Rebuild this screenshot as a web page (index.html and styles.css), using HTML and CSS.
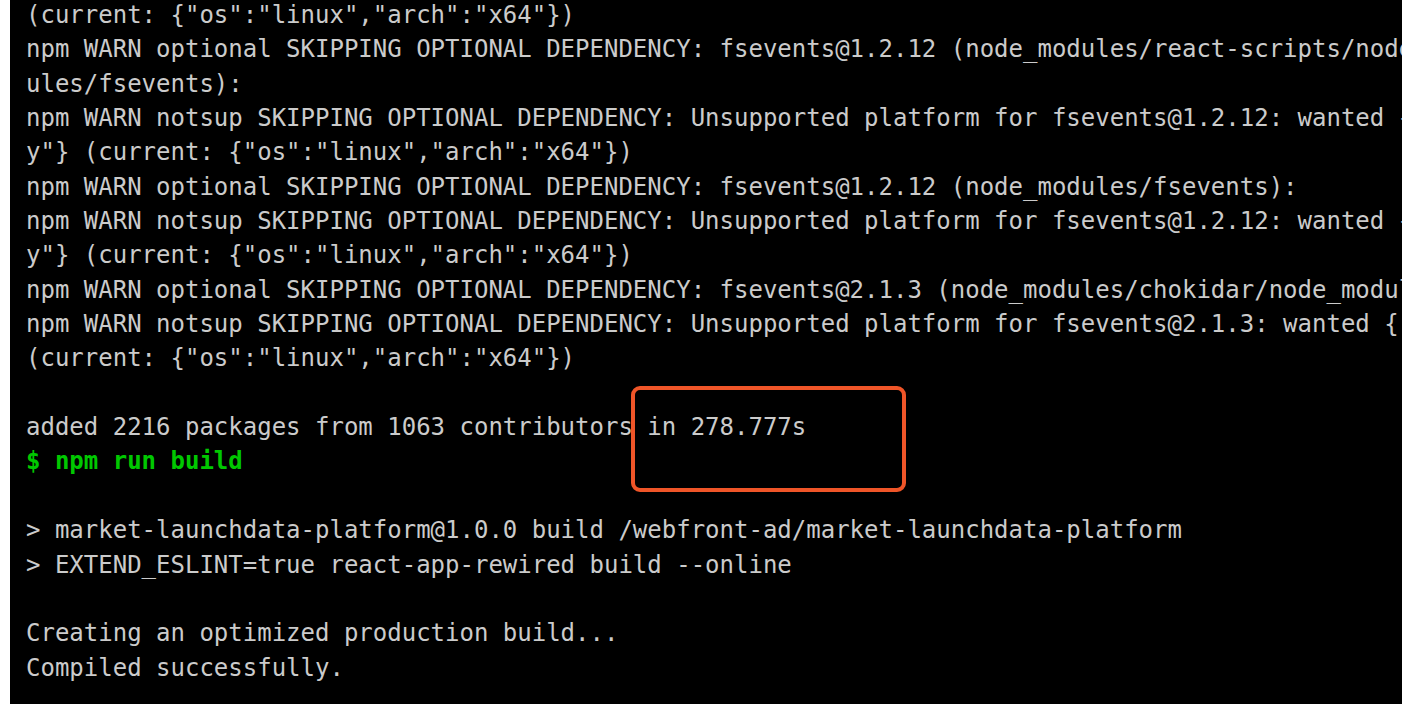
FILE: index.html
```html
<!DOCTYPE html>
<html>
<head>
<meta charset="utf-8">
<link rel="stylesheet" href="styles.css">
</head>
<body>
<div class="terminal">
<pre class="output">(current: {"os":"linux","arch":"x64"})
npm WARN optional SKIPPING OPTIONAL DEPENDENCY: fsevents@1.2.12 (node_modules/react-scripts/node_mod
ules/fsevents):
npm WARN notsup SKIPPING OPTIONAL DEPENDENCY: Unsupported platform for fsevents@1.2.12: wanted {"os":"darwin","arch":"an
y"} (current: {"os":"linux","arch":"x64"})
npm WARN optional SKIPPING OPTIONAL DEPENDENCY: fsevents@1.2.12 (node_modules/fsevents):
npm WARN notsup SKIPPING OPTIONAL DEPENDENCY: Unsupported platform for fsevents@1.2.12: wanted {"os":"darwin","arch":"an
y"} (current: {"os":"linux","arch":"x64"})
npm WARN optional SKIPPING OPTIONAL DEPENDENCY: fsevents@2.1.3 (node_modules/chokidar/node_modules/fsevents):
npm WARN notsup SKIPPING OPTIONAL DEPENDENCY: Unsupported platform for fsevents@2.1.3: wanted {"os":"darwin","arch":"any"}
(current: {"os":"linux","arch":"x64"})

added 2216 packages from 1063 contributors in 278.777s
<span class="cmd">$ npm run build</span>

&gt; market-launchdata-platform@1.0.0 build /webfront-ad/market-launchdata-platform
&gt; EXTEND_ESLINT=true react-app-rewired build --online

Creating an optimized production build...
Compiled successfully.
</pre>
<div class="highlight"></div>
</div>
</body>
</html>
```

FILE: styles.css
```css
html, body {
  margin: 0;
  padding: 0;
  background: #ffffff;
  overflow: hidden;
}

.terminal {
  position: relative;
  margin-left: 10px;
  width: 1392px;
  height: 704px;
  background: #000000;
  overflow: hidden;
}

.output {
  margin: 0;
  padding: 0 0 0 16px;
  position: relative;
  top: -2px;
  font-family: "DejaVu Sans Mono", "Liberation Mono", monospace;
  font-size: 24px;
  line-height: 34.35px;
  color: #cbcbcb;
  white-space: pre;
}

.cmd {
  color: #00c800;
  font-weight: bold;
}

.highlight {
  position: absolute;
  left: 621px;
  top: 386px;
  width: 267px;
  height: 98px;
  border: 4px solid #ef5528;
  border-radius: 9px;
}
```
